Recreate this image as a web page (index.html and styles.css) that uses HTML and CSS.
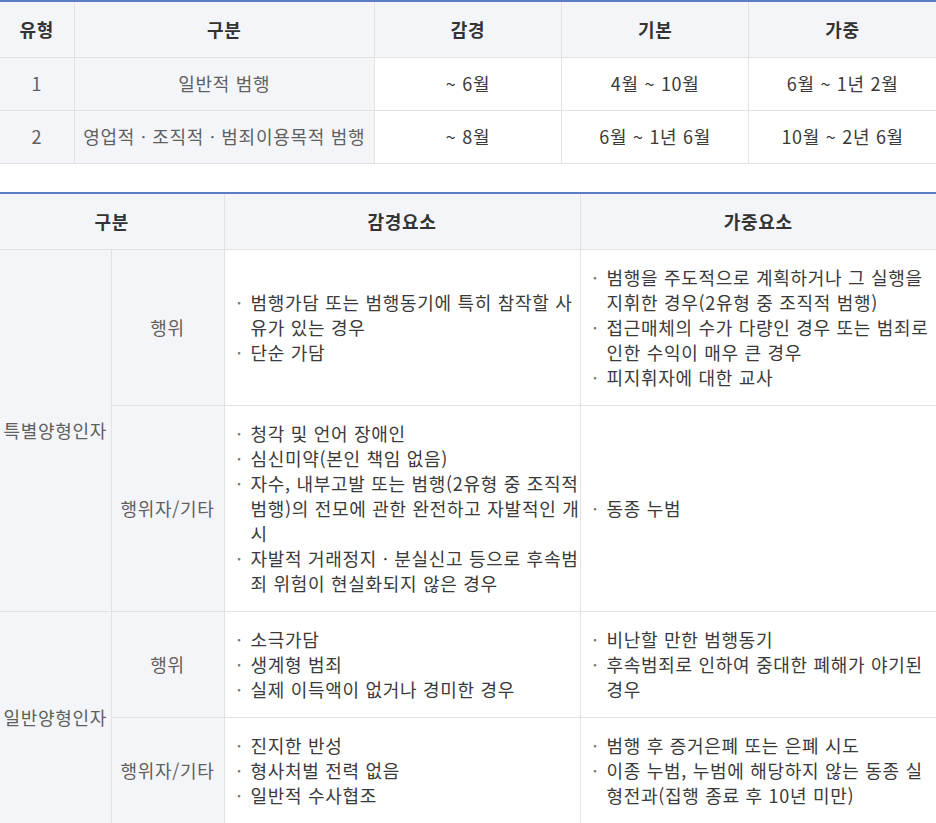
FILE: index.html
```html
<!DOCTYPE html>
<html lang="ko">
<head>
<meta charset="utf-8">
<title>양형기준</title>
<link rel="stylesheet" href="styles.css">
</head>
<body>
<table class="grid range">
  <colgroup>
    <col class="c-type"><col class="c-div"><col class="c-val"><col class="c-val"><col class="c-val">
  </colgroup>
  <thead>
    <tr><th>유형</th><th>구분</th><th>감경</th><th>기본</th><th>가중</th></tr>
  </thead>
  <tbody>
    <tr><td class="label">1</td><td class="label">일반적 범행</td><td>~ 6월</td><td>4월 ~ 10월</td><td>6월 ~ 1년 2월</td></tr>
    <tr><td class="label">2</td><td class="label">영업적ㆍ조직적ㆍ범죄이용목적 범행</td><td>~ 8월</td><td>6월 ~ 1년 6월</td><td>10월 ~ 2년 6월</td></tr>
  </tbody>
</table>

<table class="grid factors">
  <colgroup>
    <col class="c-group"><col class="c-sub"><col class="c-text"><col class="c-text">
  </colgroup>
  <thead>
    <tr><th colspan="2">구분</th><th>감경요소</th><th>가중요소</th></tr>
  </thead>
  <tbody>
    <tr>
      <td class="label group" rowspan="2">특별양형인자</td>
      <td class="label">행위</td>
      <td class="text"><ul class="dots">
        <li><span>범행가담 또는 범행동기에 특히 참작할 사<br>유가 있는 경우</span></li>
        <li><span>단순 가담</span></li>
      </ul></td>
      <td class="text"><ul class="dots">
        <li><span>범행을 주도적으로 계획하거나 그 실행을<br>지휘한 경우(2유형 중 조직적 범행)</span></li>
        <li><span>접근매체의 수가 다량인 경우 또는 범죄로<br>인한 수익이 매우 큰 경우</span></li>
        <li><span>피지휘자에 대한 교사</span></li>
      </ul></td>
    </tr>
    <tr>
      <td class="label">행위자/기타</td>
      <td class="text"><ul class="dots">
        <li><span>청각 및 언어 장애인</span></li>
        <li><span>심신미약(본인 책임 없음)</span></li>
        <li><span>자수, 내부고발 또는 범행(2유형 중 조직적<br>범행)의 전모에 관한 완전하고 자발적인 개<br>시</span></li>
        <li><span>자발적 거래정지ㆍ분실신고 등으로 후속범<br>죄 위험이 현실화되지 않은 경우</span></li>
      </ul></td>
      <td class="text"><ul class="dots">
        <li><span>동종 누범</span></li>
      </ul></td>
    </tr>
    <tr>
      <td class="label group" rowspan="2">일반양형인자</td>
      <td class="label">행위</td>
      <td class="text"><ul class="dots">
        <li><span>소극가담</span></li>
        <li><span>생계형 범죄</span></li>
        <li><span>실제 이득액이 없거나 경미한 경우</span></li>
      </ul></td>
      <td class="text"><ul class="dots">
        <li><span>비난할 만한 범행동기</span></li>
        <li><span>후속범죄로 인하여 중대한 폐해가 야기된<br>경우</span></li>
      </ul></td>
    </tr>
    <tr>
      <td class="label">행위자/기타</td>
      <td class="text"><ul class="dots">
        <li><span>진지한 반성</span></li>
        <li><span>형사처벌 전력 없음</span></li>
        <li><span>일반적 수사협조</span></li>
      </ul></td>
      <td class="text"><ul class="dots">
        <li><span>범행 후 증거은폐 또는 은폐 시도</span></li>
        <li><span>이종 누범, 누범에 해당하지 않는 동종 실<br>형전과(집행 종료 후 10년 미만)</span></li>
      </ul></td>
    </tr>
  </tbody>
</table>
</body>
</html>
```

FILE: styles.css
```css
html, body {
  margin: 0;
  padding: 0;
  background: #ffffff;
}

body {
  font-family: "Noto Sans CJK KR", "Noto Sans", sans-serif;
  font-size: 18px;
  letter-spacing: 0.7px;
  line-height: 25px;
  color: #444;
}

.grid {
  width: 936px;
  border-collapse: collapse;
  table-layout: fixed;
  border-top: 2px solid #5b7bc4;
}

.grid th,
.grid td {
  border: 1px solid #e2e2e2;
  text-align: center;
  vertical-align: middle;
}

.grid tr > :first-child { border-left: 0; }
.grid tr > :last-child { border-right: 0; }

.grid th {
  background: #f3f5f9;
  color: #333;
  font-weight: 700;
  padding: 15px 10px;
}

.grid td {
  padding: 13px 10px 14px;
  white-space: nowrap;
}

.grid td.label {
  background: #f4f5f9;
  color: #5f5f5f;
  padding-left: 2px;
  padding-right: 2px;
}

.c-type { width: 74px; }
.c-div { width: 300px; }
.c-val { width: 187px; }

.range td { color: #3a3a3a; }

.factors {
  margin-top: 28px;
}

.c-group { width: 111px; }
.c-sub { width: 113px; }
.c-text { width: 356px; }

.factors td.group {
  padding: 0 2px;
}

.factors td.text {
  text-align: left;
  padding: 15px 2px 15px 12px;
  color: #3a3a3a;
}

.dots {
  list-style: none;
  margin: 0;
  padding: 0;
}

.dots li {
  display: flex;
}

.dots li::before {
  content: "·";
  flex: 0 0 14px;
  color: #777;
}
```
